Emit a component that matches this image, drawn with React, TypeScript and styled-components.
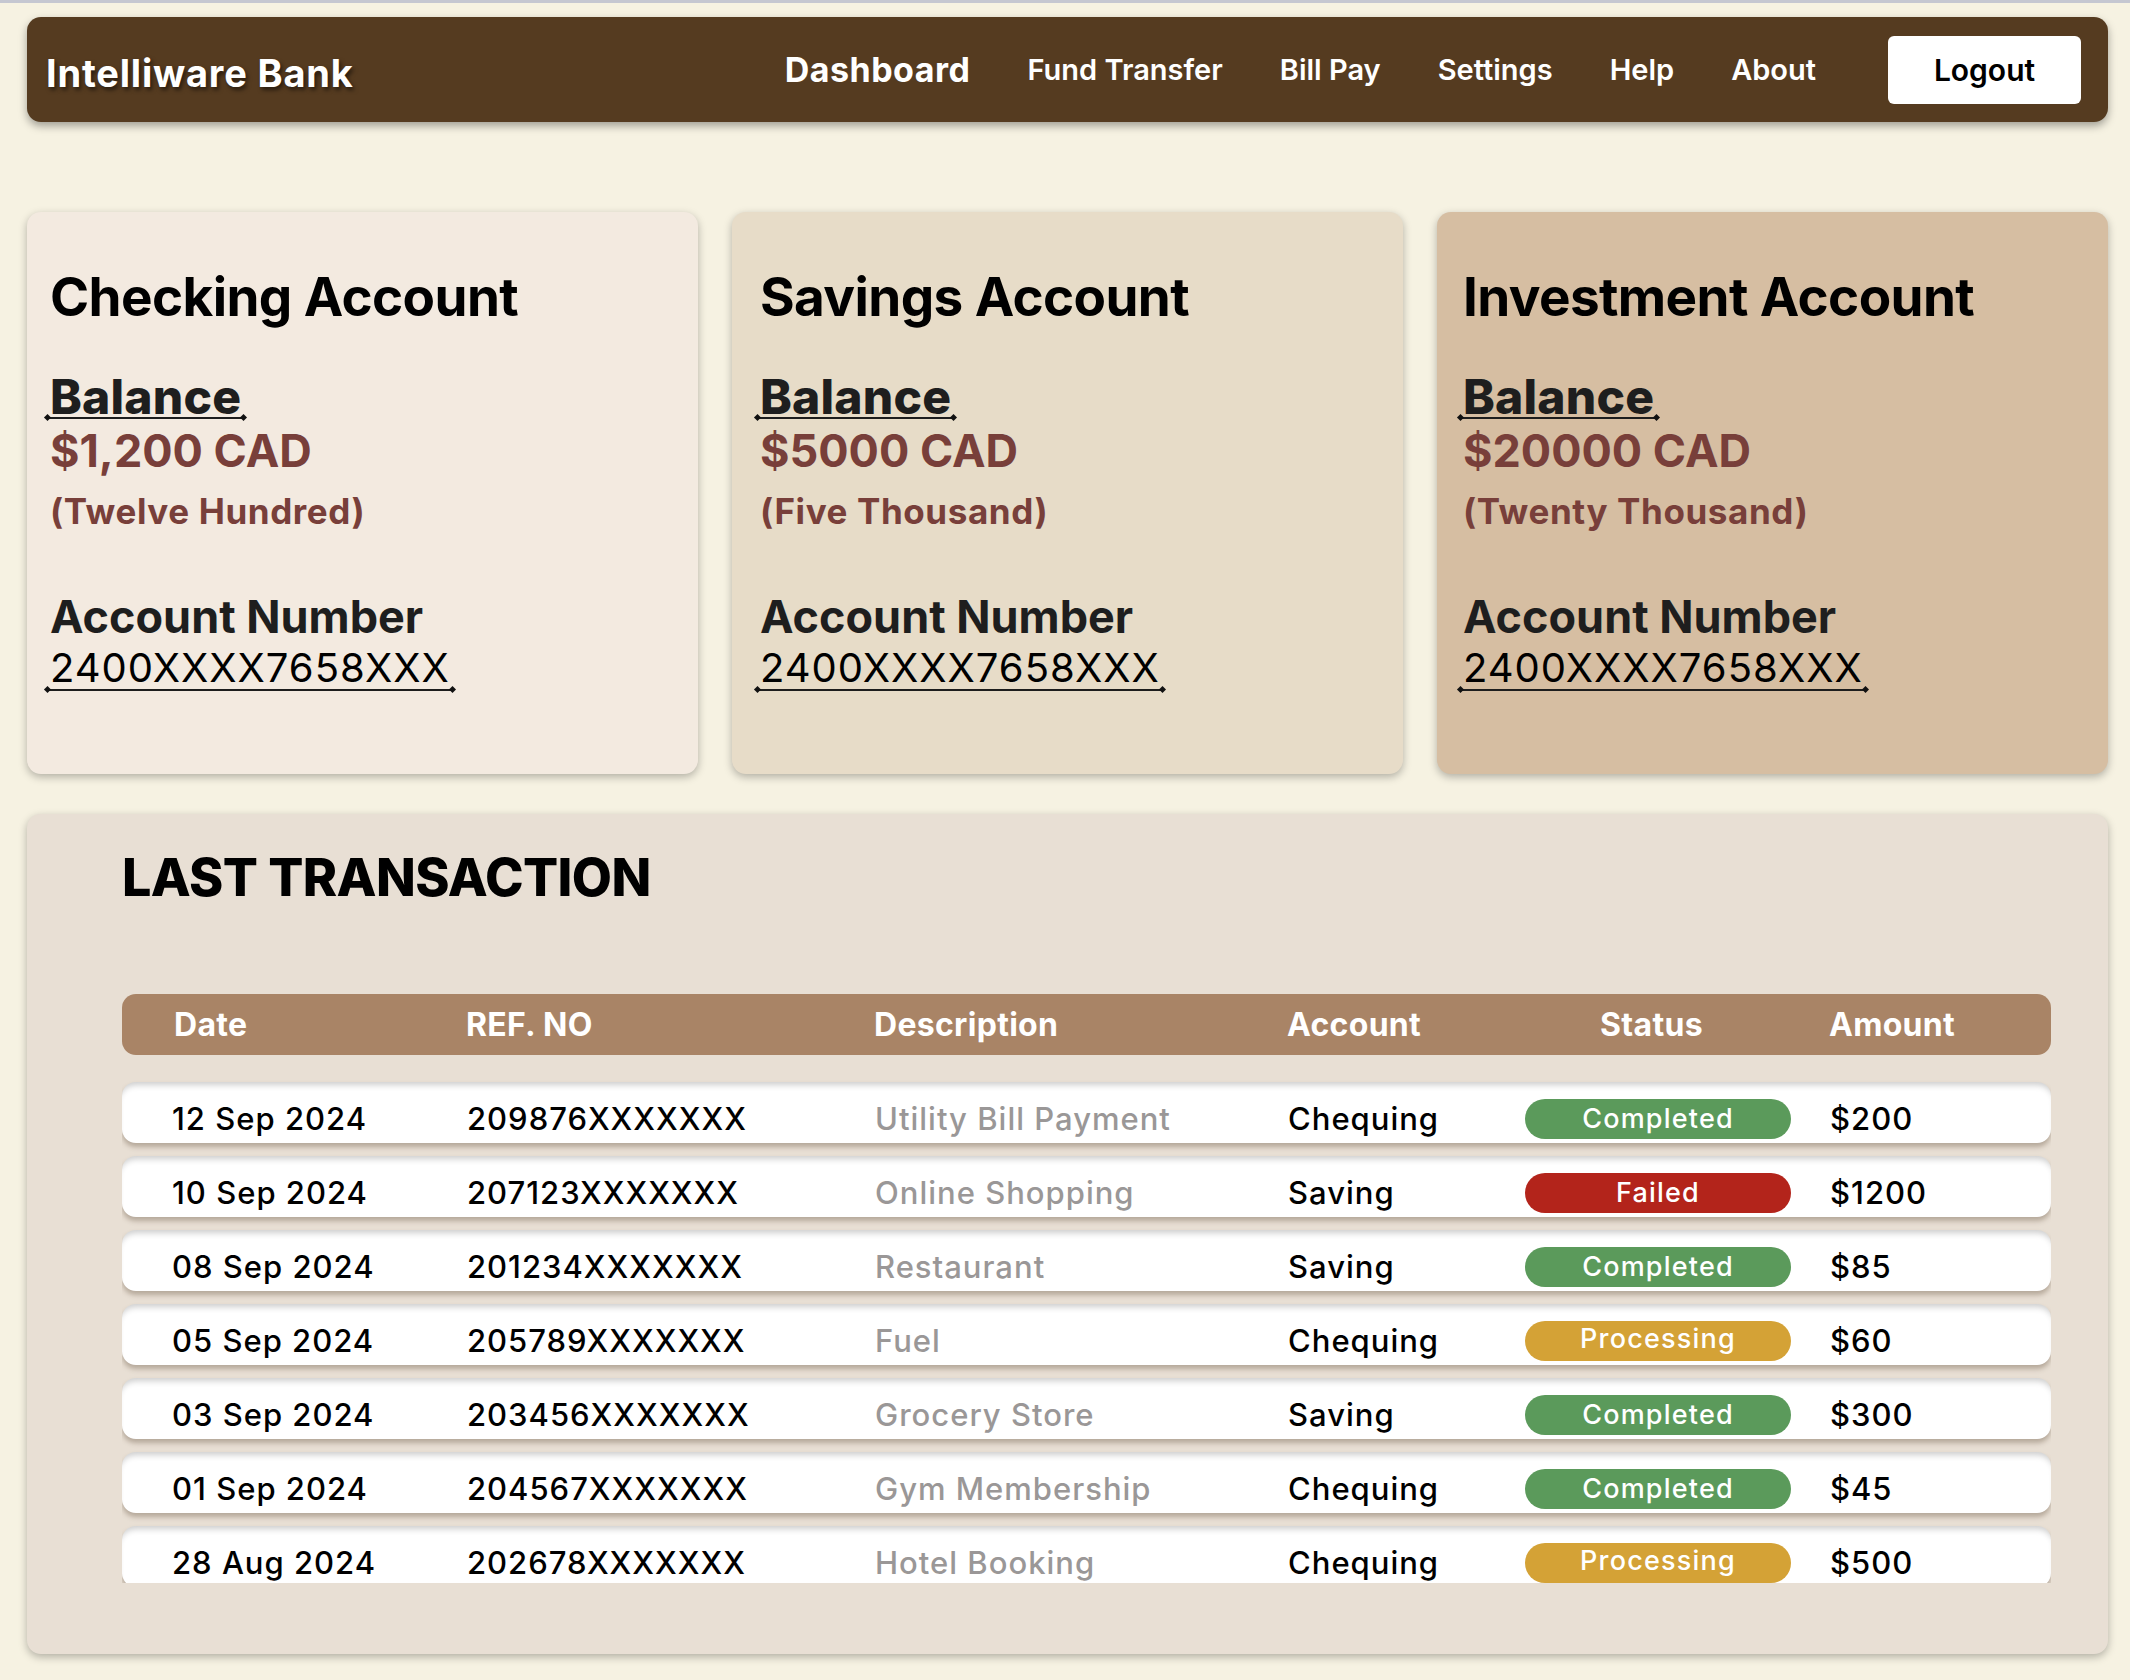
import React from "react";
import styled, { createGlobalStyle } from "styled-components";

const GlobalStyle = createGlobalStyle`
  html, body { margin: 0; padding: 0; }
  body {
    background: #f6f2e2;
    font-family: Inter, "Noto Sans", "Liberation Sans", sans-serif;
    color: #000;
  }
  * { box-sizing: border-box; }
`;

const Page = styled.div`
  min-height: 1680px;
  border-top: 3px solid #c5c7d1;
  padding: 14px 22px 26px 27px;
  background: #f6f2e2;
`;

const NavBar = styled.header`
  height: 105px;
  background: #553b20;
  border-radius: 14px;
  box-shadow: 0 4px 8px rgba(0, 0, 0, 0.35);
  display: flex;
  align-items: center;
  justify-content: space-between;
  padding: 0 27px 0 19px;
`;

const Logo = styled.div`
  color: #fff;
  font-size: 38px;
  font-weight: 700;
  letter-spacing: 0.8px;
  line-height: 1;
  margin-top: 6px;
  text-shadow: 2px 3px 4px rgba(0, 0, 0, 0.55);
`;

const NavRight = styled.nav`
  display: flex;
  align-items: center;
`;

const NavLinks = styled.div`
  display: flex;
  align-items: center;
  gap: 57px;
  margin-right: 72px;
`;

const NavLink = styled.a<{ $active?: boolean }>`
  color: #fff;
  text-decoration: none;
  font-size: ${(p) => (p.$active ? "34px" : "29px")};
  font-weight: ${(p) => (p.$active ? 700 : 600)};
  letter-spacing: ${(p) => (p.$active ? "0.5px" : "0")};
  line-height: 1;
`;

const LogoutButton = styled.button`
  width: 193px;
  height: 68px;
  background: #fff;
  border: none;
  border-radius: 6px;
  font-family: inherit;
  font-size: 30px;
  font-weight: 600;
  color: #000;
  cursor: pointer;
`;

const CardGrid = styled.section`
  margin-top: 90px;
  display: grid;
  grid-template-columns: repeat(3, 1fr);
  gap: 34px;
`;

const Card = styled.div<{ $bg: string; $pad: number }>`
  height: 562px;
  background: ${(p) => p.$bg};
  border-radius: 14px;
  box-shadow: 0 3px 8px rgba(0, 0, 0, 0.28);
  padding: 59px 20px 0 ${(p) => p.$pad}px;
`;

const CardTitle = styled.h2`
  margin: 0;
  font-size: 53px;
  font-weight: 700;
  letter-spacing: -0.6px;
  line-height: 1;
  color: #000;
`;

const Label = styled.div<{
  $size: number;
  $mt: number;
  $weight: number;
  $color: string;
  $ls?: number;
}>`
  margin-top: ${(p) => p.$mt}px;
  font-size: ${(p) => p.$size}px;
  font-weight: ${(p) => p.$weight};
  letter-spacing: ${(p) => p.$ls ?? 0}px;
  line-height: 1;
  color: ${(p) => p.$color};
`;

const Marked = styled.span<{ $line: number }>`
  position: relative;
  display: inline-block;
  padding: 0 3px;
  margin-left: -3px;
  height: ${(p) => p.$line + 2}px;
  background-image: linear-gradient(#1d1d1d, #1d1d1d);
  background-repeat: no-repeat;
  background-size: 100% 2px;
  background-position: 0 ${(p) => p.$line}px;
  &::before,
  &::after {
    content: "";
    position: absolute;
    top: ${(p) => p.$line - 2}px;
    width: 5px;
    height: 5px;
    background: #111;
    transform: rotate(45deg);
  }
  &::before {
    left: -2px;
  }
  &::after {
    right: -2px;
  }
`;

const Panel = styled.section`
  margin-top: 40px;
  height: 840px;
  background: #e8dfd4;
  border-radius: 14px;
  box-shadow: 0 3px 8px rgba(0, 0, 0, 0.28);
  padding: 38px 57px 0 95px;
  display: flex;
  flex-direction: column;
`;

const PanelTitle = styled.h2`
  margin: 0;
  font-size: 52px;
  font-weight: 800;
  letter-spacing: -0.6px;
  line-height: 1;
  color: #000;
`;

const cols = "292px 408px 413px 236px 267px 1fr";

const HeaderBar = styled.div`
  margin-top: 90px;
  height: 61px;
  background: #a98466;
  border-radius: 14px;
  display: grid;
  grid-template-columns: ${cols};
  align-items: center;
  padding-left: 52px;
  color: #fff;
  font-size: 32px;
  font-weight: 700;
  letter-spacing: 0.3px;
`;

const HeadCell = styled.div<{ $center?: boolean; $pl?: number; $pr?: number }>`
  text-align: ${(p) => (p.$center ? "center" : "left")};
  padding-left: ${(p) => p.$pl ?? 0}px;
  padding-right: ${(p) => p.$pr ?? 0}px;
  line-height: 1;
`;

const RowsViewport = styled.div`
  height: 528px;
  overflow: hidden;
  padding-top: 27px;
  display: flex;
  flex-direction: column;
  gap: 13px;
`;

const Row = styled.div`
  flex: none;
  height: 61px;
  background: #fff;
  border-radius: 14px;
  box-shadow: inset 0 7px 6px -4px rgba(0, 0, 0, 0.2), 0 4px 5px rgba(90, 70, 50, 0.35);
  display: grid;
  grid-template-columns: ${cols};
  align-items: center;
  padding: 12px 0 0 53px;
  font-size: 31px;
  font-weight: 500;
  letter-spacing: 1px;
  color: #000;
`;

const Cell = styled.div<{ $muted?: boolean; $pl?: number; $ml?: number }>`
  color: ${(p) => (p.$muted ? "#9a9797" : "#000")};
  padding-left: ${(p) => p.$pl ?? 0}px;
  margin-left: ${(p) => p.$ml ?? 0}px;
  line-height: 1;
  white-space: nowrap;
`;

const statusColors: Record<string, string> = {
  Completed: "#5b9a5b",
  Failed: "#b3241b",
  Processing: "#d4a236",
};

const Badge = styled.div<{ $status: string }>`
  height: 40px;
  border-radius: 20px;
  background: ${(p) => statusColors[p.$status]};
  color: #fff;
  font-size: 27px;
  font-weight: 500;
  letter-spacing: 1.2px;
  display: flex;
  align-items: center;
  justify-content: center;
  padding-bottom: ${(p) => (p.$status === "Processing" ? 4 : 0)}px;
  margin-left: 1px;
`;

const accounts = [
  {
    title: "Checking Account",
    amount: "$1,200 CAD",
    words: "(Twelve Hundred)",
    bg: "#f3eae0",
    pad: 23,
  },
  {
    title: "Savings Account",
    amount: "$5000 CAD",
    words: "(Five Thousand)",
    bg: "#e7dcc8",
    pad: 28,
  },
  {
    title: "Investment Account",
    amount: "$20000 CAD",
    words: "(Twenty Thousand)",
    bg: "#d6bea2",
    pad: 26,
  },
];

const transactions = [
  ["12 Sep 2024", "209876XXXXXXX", "Utility Bill Payment", "Chequing", "Completed", "$200"],
  ["10 Sep 2024", "207123XXXXXXX", "Online Shopping", "Saving", "Failed", "$1200"],
  ["08 Sep 2024", "201234XXXXXXX", "Restaurant", "Saving", "Completed", "$85"],
  ["05 Sep 2024", "205789XXXXXXX", "Fuel", "Chequing", "Processing", "$60"],
  ["03 Sep 2024", "203456XXXXXXX", "Grocery Store", "Saving", "Completed", "$300"],
  ["01 Sep 2024", "204567XXXXXXX", "Gym Membership", "Chequing", "Completed", "$45"],
  ["28 Aug 2024", "202678XXXXXXX", "Hotel Booking", "Chequing", "Processing", "$500"],
];

export default function App() {
  return (
    <>
      <GlobalStyle />
      <Page>
        <NavBar>
          <Logo>Intelliware Bank</Logo>
          <NavRight>
            <NavLinks>
              <NavLink $active href="#">Dashboard</NavLink>
              <NavLink href="#">Fund Transfer</NavLink>
              <NavLink href="#">Bill Pay</NavLink>
              <NavLink href="#">Settings</NavLink>
              <NavLink href="#">Help</NavLink>
              <NavLink href="#">About</NavLink>
            </NavLinks>
            <LogoutButton>Logout</LogoutButton>
          </NavRight>
        </NavBar>

        <CardGrid>
          {accounts.map((a) => (
            <Card key={a.title} $bg={a.bg} $pad={a.pad}>
              <CardTitle>{a.title}</CardTitle>
              <Label $size={48} $mt={49} $weight={800} $color="#1e1e1e" $ls={0.2}>
                <Marked $line={44}>Balance</Marked>
              </Label>
              <Label $size={45} $mt={7} $weight={700} $color="#783f3a">
                {a.amount}
              </Label>
              <Label $size={35} $mt={21} $weight={700} $color="#783f3a" $ls={0.6}>
                {a.words}
              </Label>
              <Label $size={45} $mt={65} $weight={700} $color="#1e1e1e">
                Account Number
              </Label>
              <Label $size={40} $mt={9} $weight={400} $color="#000" $ls={1}>
                <Marked $line={41}>2400XXXX7658XXX</Marked>
              </Label>
            </Card>
          ))}
        </CardGrid>

        <Panel>
          <PanelTitle>LAST TRANSACTION</PanelTitle>
          <HeaderBar>
            <HeadCell>Date</HeadCell>
            <HeadCell>REF. NO</HeadCell>
            <HeadCell>Description</HeadCell>
            <HeadCell>Account</HeadCell>
            <HeadCell $center $pr={10}>Status</HeadCell>
            <HeadCell $pl={39}>Amount</HeadCell>
          </HeaderBar>
          <RowsViewport>
            {transactions.map((t) => (
              <Row key={t[1]}>
                <Cell $ml={-3}>{t[0]}</Cell>
                <Cell>{t[1]}</Cell>
                <Cell $muted>{t[2]}</Cell>
                <Cell>{t[3]}</Cell>
                <Badge $status={t[4]}>{t[4]}</Badge>
                <Cell $pl={39}>{t[5]}</Cell>
              </Row>
            ))}
          </RowsViewport>
        </Panel>
      </Page>
    </>
  );
}
